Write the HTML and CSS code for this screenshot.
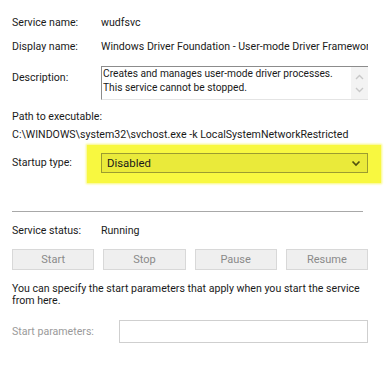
FILE: index.html
```html
<!DOCTYPE html>
<html>
<head>
<meta charset="utf-8">
<link rel="stylesheet" href="styles.css">
</head>
<body>
<div class="dlg">
  <div class="row r1"><span class="lbl">Service name:</span><span class="val">wudfsvc</span></div>
  <div class="row r2"><span class="lbl">Display name:</span><span class="val clip">Windows Driver Foundation - User-mode Driver Framework</span></div>
  <div class="row r3">
    <span class="lbl lbl-desc">Description:</span>
    <div class="desc">
      <div class="desc-text">Creates and manages user-mode driver processes.<br>This service cannot be stopped.</div>
      <div class="scroll">
        <svg width="9" height="6" viewBox="0 0 9 6"><path d="M1 5 L4.5 1.5 L8 5" fill="none" stroke="#c8c8c8" stroke-width="1.4"/></svg>
        <svg width="9" height="6" viewBox="0 0 9 6"><path d="M1 1 L4.5 4.5 L8 1" fill="none" stroke="#c8c8c8" stroke-width="1.4"/></svg>
      </div>
    </div>
  </div>
  <div class="row r4">Path to executable:</div>
  <div class="row r5">C:\WINDOWS\system32\svchost.exe -k LocalSystemNetworkRestricted</div>
  <div class="row r6">
    <span class="lbl lbl-startup">Startup type:</span>
    <div class="hl">
      <div class="select">
        <span>Disabled</span>
        <svg width="10" height="7" viewBox="0 0 10 7"><path d="M1.5 1.5 L5 5 L8.5 1.5" fill="none" stroke="#505010" stroke-width="1.7"/></svg>
      </div>
    </div>
  </div>
  <div class="sep"></div>
  <div class="row r7"><span class="lbl">Service status:</span><span class="val">Running</span></div>
  <div class="btns">
    <div class="btn">Start</div>
    <div class="btn">Stop</div>
    <div class="btn">Pause</div>
    <div class="btn">Resume</div>
  </div>
  <p class="para">You can specify the start parameters that apply when you start the service<br>from here.</p>
  <div class="row r8"><span class="lbl lbl-params">Start parameters:</span><div class="input"></div></div>
</div>
</body>
</html>
```
FILE: styles.css
```css
html, body {
  margin: 0;
  padding: 0;
  background: #ffffff;
}
body {
  width: 384px;
  height: 367px;
  overflow: hidden;
  font-family: Roboto, "Liberation Sans", sans-serif;
  font-size: 10.6px;
  color: #1a1a1a;
}
.dlg {
  padding: 16px 16px 0 12px;
  width: 356px;
}
.row {
  display: flex;
  align-items: flex-start;
  line-height: 14px;
  white-space: nowrap;
}
.lbl {
  width: 89px;
  flex: none;
}
.val {
  flex: 1;
  min-width: 0;
}
.clip {
  overflow: hidden;
}
.r2 { margin-top: 10px; }
.r3 { margin-top: 12px; }
.lbl-desc { padding-top: 5px; }
.desc {
  flex: 1;
  height: 34px;
  display: flex;
  border-top: 1px solid #8c8c8c;
  border-left: 1px solid #8c8c8c;
  border-bottom: 1px solid #e4e4e4;
  box-sizing: border-box;
}
.desc-text {
  flex: 1;
  white-space: nowrap;
  line-height: 14px;
  padding: 0 0 0 1px;
  font-size: 10.2px;
}
.scroll {
  width: 17px;
  background: #f3f3f3;
  display: flex;
  flex-direction: column;
  align-items: center;
  justify-content: space-around;
  padding: 3px 0;
}
.r4 { margin-top: 10px; }
.r5 { margin-top: 4px; }
.r6 {
  margin-top: 3px;
}
.lbl-startup {
  padding-top: 11px;
  width: 75px;
}
.hl {
  flex: 1;
  margin-right: -13px;
  background: #f8f840;
  box-shadow: 0 0 2px 1px #f9f878;
  padding: 8px 13px 10px 14px;
}
.select {
  height: 20px;
  box-sizing: border-box;
  border: 1px solid #9c9c30;
  background: #eaea3a;
  display: flex;
  align-items: center;
  justify-content: space-between;
  padding: 0 6px 0 5px;
  font-size: 11.4px;
}
.sep {
  margin-top: 28px;
  width: 351px;
  height: 1px;
  background: #a8a8a8;
}
.r7 { margin-top: 12px; }
.btns {
  margin-top: 11px;
  display: flex;
  gap: 9px;
}
.btn {
  flex: 1;
  height: 21px;
  box-sizing: border-box;
  background: #efefef;
  border: 1px solid #d8d8d8;
  color: #8a8a8a;
  display: flex;
  align-items: center;
  justify-content: center;
  font-size: 11px;
}
.para {
  margin: 13px 0 0 0;
  line-height: 12px;
  white-space: nowrap;
}
.r8 {
  margin-top: 13px;
  align-items: center;
}
.lbl-params {
  width: 107px;
  color: #9a9a9a;
}
.input {
  flex: 1;
  height: 23px;
  box-sizing: border-box;
  border: 1px solid #cfcfcf;
}
```
